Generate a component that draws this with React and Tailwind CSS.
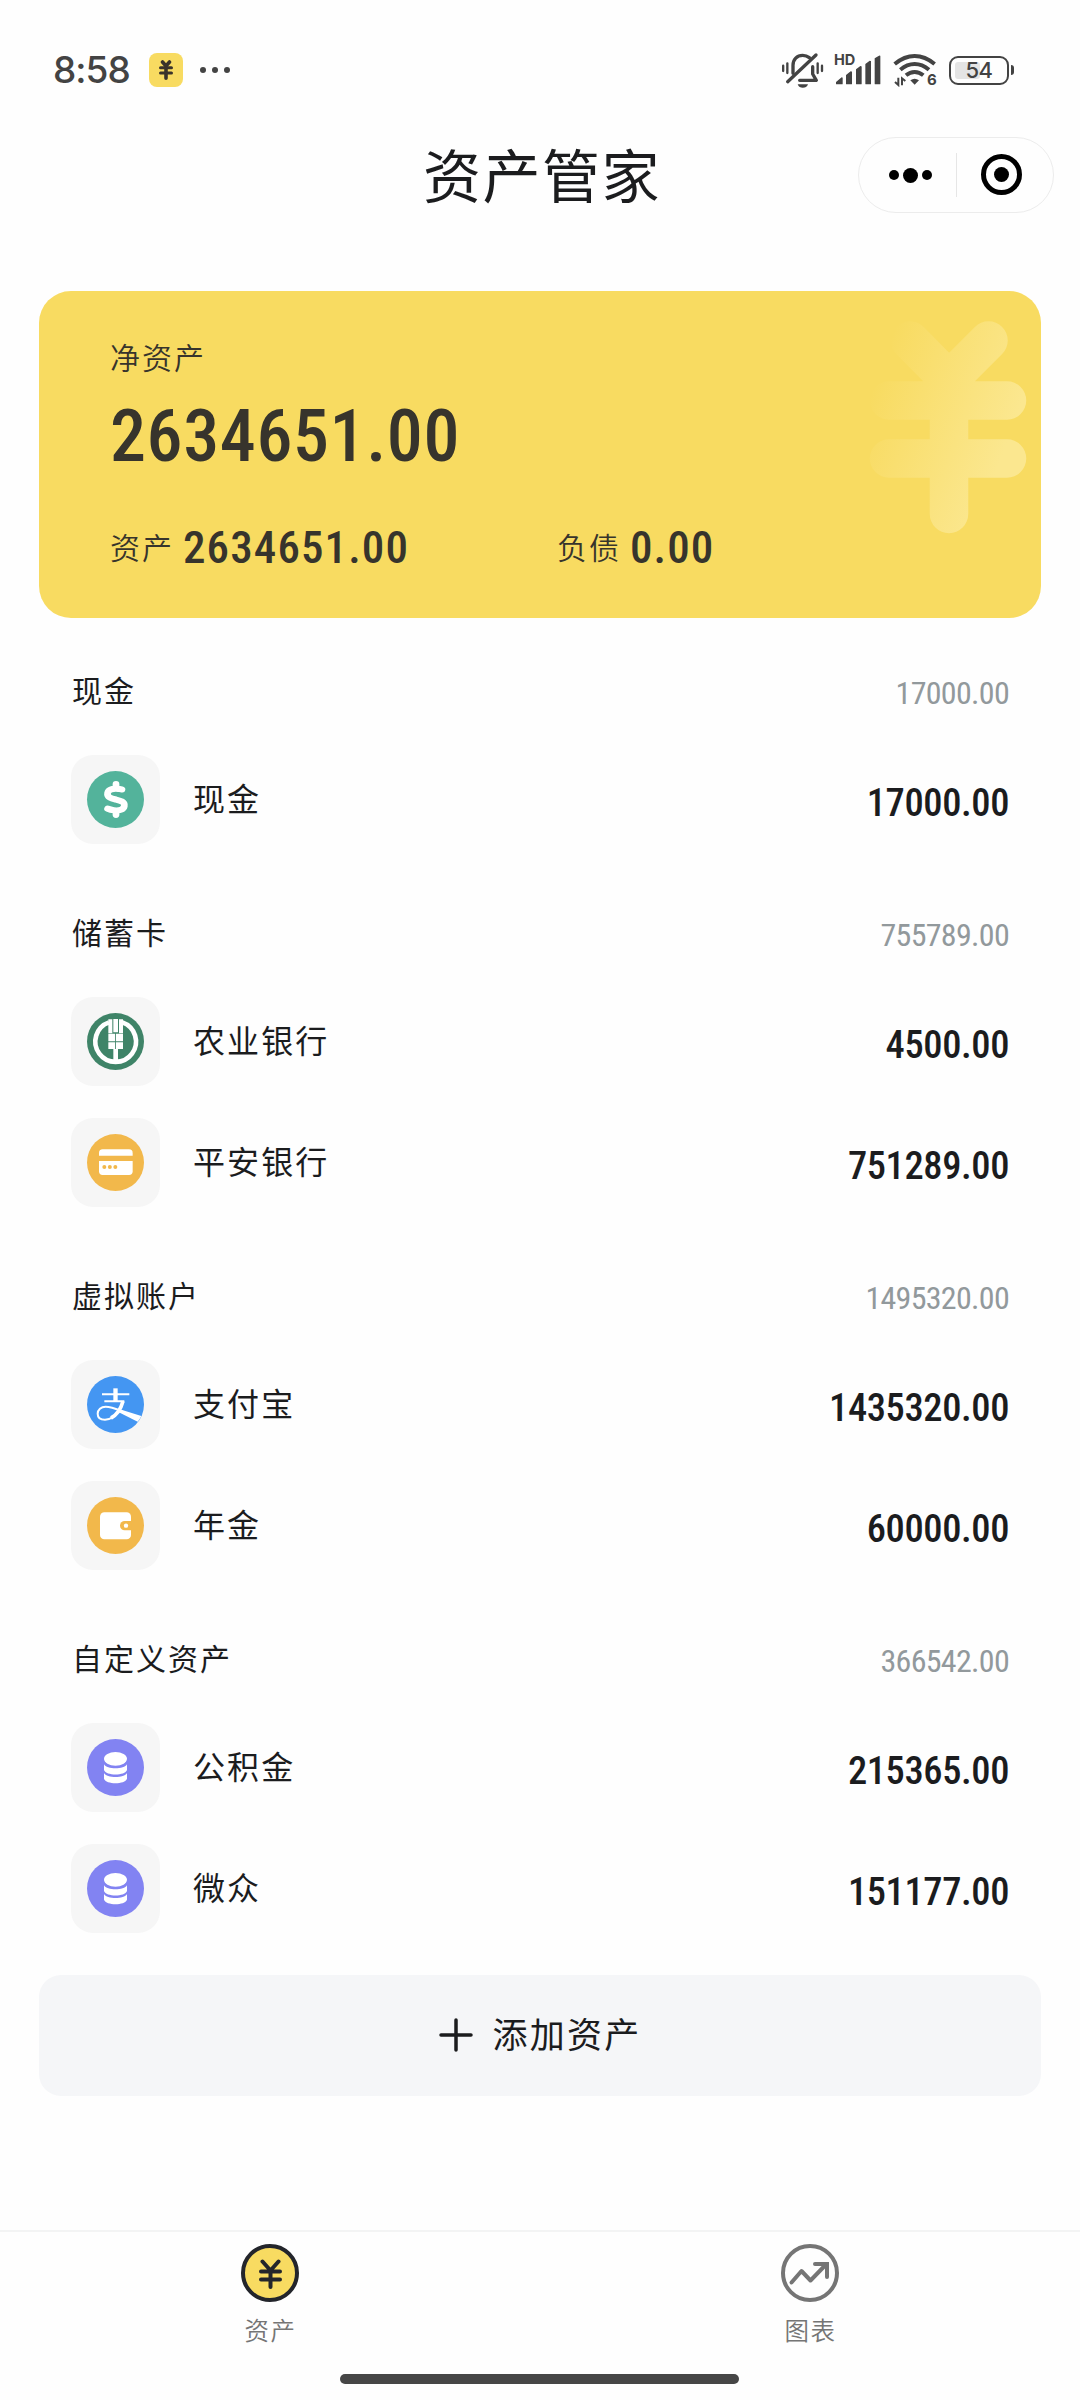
import { FaDollarSign } from 'react-icons/fa6'

const groups = [
  {
    title: '现金',
    total: '17000.00',
    items: [{ name: '现金', amount: '17000.00', Icon: CashIcon }],
  },
  {
    title: '储蓄卡',
    total: '755789.00',
    items: [
      { name: '农业银行', amount: '4500.00', Icon: AbcIcon },
      { name: '平安银行', amount: '751289.00', Icon: CardIcon },
    ],
  },
  {
    title: '虚拟账户',
    total: '1495320.00',
    items: [
      { name: '支付宝', amount: '1435320.00', Icon: AlipayIcon },
      { name: '年金', amount: '60000.00', Icon: WalletIcon },
    ],
  },
  {
    title: '自定义资产',
    total: '366542.00',
    items: [
      { name: '公积金', amount: '215365.00', Icon: CoinsIcon },
      { name: '微众', amount: '151177.00', Icon: CoinsIcon },
    ],
  },
]

function CashIcon() {
  return (
    <div className="size-[57px] rounded-full bg-[#53b39b] flex items-center justify-center">
      <FaDollarSign className="h-[35px] w-[24px] text-white overflow-visible" preserveAspectRatio="none" strokeWidth="26" />
    </div>
  )
}

function AbcIcon() {
  return (
    <svg viewBox="0 0 171 171" className="size-[57px]">
      <circle cx="85.5" cy="85.5" r="85.5" fill="#3f8468" />
      <path d="M66 28a61 61 0 1 0 40 0" fill="none" stroke="#fff" strokeWidth="14" />
      <path d="M64 19h12v42H64zM96 19h12v42H96zM79 18h14v40H79z" fill="#fff" />
      <path d="M64 62h20.500v23H64zM87 62h21v23H87zM64 87.500h20.500V108H64zM87 87.500h21V108H87z" fill="#fff" />
      <path d="M79 108h14v36H79z" fill="#fff" />
    </svg>
  )
}

function CardIcon() {
  return (
    <svg viewBox="0 0 171 171" className="size-[57px]">
      <circle cx="85.5" cy="85.5" r="85.5" fill="#f2b84b" />
      <path d="M36 65v-8a11 11 0 0 1 11-11h79a11 11 0 0 1 11 11v8z" fill="#fff" />
      <path d="M36 81v31a11 11 0 0 0 11 11h79a11 11 0 0 0 11-11V81z" fill="#fff" />
      <g fill="#f2b84b">
        <circle cx="52" cy="99" r="6" />
        <circle cx="68.5" cy="99" r="6" />
        <circle cx="85" cy="99" r="6" />
      </g>
    </svg>
  )
}

function AlipayIcon() {
  return (
    <svg viewBox="0 0 171 171" className="size-[57px]" fill="none" stroke="#fff">
      <circle cx="85.5" cy="85.5" r="85.5" fill="#4496f2" stroke="none" />
      <path d="M45 55h82M52 76h60" strokeWidth="6" />
      <path d="M85.500 37v39" strokeWidth="13" />
      <path d="M108 76c-7 25-20 42-36 50" strokeWidth="11" />
      <path d="M78 123c-8 6-15 8-24 8-15 0-22-8-22-18 0-12 10-21 24-21 20 0 34 8 56 17" strokeWidth="6" />
      <path d="M96 99l67 21q-4 9-11 17L94 108z" fill="#fff" stroke="none" />
    </svg>
  )
}

function WalletIcon() {
  return (
    <svg viewBox="0 0 171 171" className="size-[57px]">
      <circle cx="85.5" cy="85.5" r="85.5" fill="#f2b84b" />
      <rect x="39" y="46" width="93" height="81" rx="13" fill="#fff" />
      <path d="M134 72h-21a14 14 0 0 0 0 28h21z" fill="#f2b84b" />
      <circle cx="117" cy="86" r="6.500" fill="#fff" />
    </svg>
  )
}

function CoinsIcon() {
  return (
    <svg viewBox="0 0 171 171" className="size-[57px]">
      <circle cx="85.5" cy="85.5" r="85.5" fill="#8283f2" />
      <g fill="#fff">
        <ellipse cx="85.5" cy="59.500" rx="34.500" ry="20.500" />
        <path d="M51 76c8 16 61 16 69 0v17c-6 18-63 18-69 0z" />
        <path d="M51 102c8 16 61 16 69 0v17c-6 18-63 18-69 0z" />
      </g>
    </svg>
  )
}

function StatusBar() {
  return (
    <div className="h-[120px] pt-[20px] pl-[53px] pr-[66px] flex items-center justify-between text-[#434343]">
      <div className="flex items-center">
        <span className='w-[96px] font-["Inter",sans-serif] text-[37px] leading-[44px] font-[450] tracking-[-1px]'>8:58</span>
        <span className="size-[34px] rounded-[8px] bg-[#f8db61] flex items-center justify-center">
          <svg viewBox="0 0 14 20" className="w-[14px] h-[20px]" fill="none" stroke="#3a332b" strokeWidth="3.600" strokeLinecap="round">
            <path d="M3.500 2L7 6l3.500-4M7 6v12.200" />
            <path d="M1.500 7.800h11M1.500 13h11" strokeWidth="3" />
          </svg>
        </span>
        <span className="ml-[17px] flex gap-[6px]">
          <i className="size-[6px] rounded-full bg-[#434343]" />
          <i className="size-[6px] rounded-full bg-[#434343]" />
          <i className="size-[6px] rounded-full bg-[#434343]" />
        </span>
      </div>

      <div className="flex items-center">
        {/* silent mode */}
        <svg viewBox="0 0 126 108" className="w-[42px] h-[36px]" fill="none" stroke="#434343" strokeLinecap="round">
          <path d="M33 64V40C33 22 45 10 62 10c9 0 15 3 20 7" strokeWidth="10" />
          <path d="M102 9L17 89" strokeWidth="10" />
          <path d="M92 44v22l11 19H53" strokeWidth="10" strokeLinejoin="round" />
          <path d="M3.500 41v16M16 34v29M107 34v29M120 41v16" strokeWidth="7" />
          <path d="M47 97h31c-3 8-8 10-15.500 10S50 105 47 97z" fill="#434343" stroke="none" />
        </svg>
        {/* mobile signal */}
        <div className="relative ml-[10px] w-[47px] h-[30px]">
          <span className='absolute left-0 top-[-4px] font-["Inter",sans-serif] text-[14.500px] leading-[18px] font-bold'>HD</span>
          <svg viewBox="0 0 140 90" className="w-[46.700px] h-[30px]" fill="#434343">
            <path d="M6 86v-5l17-14q3 0 3 2v17q0 2-2 2H8q-2 0-2-2zM36 86V60l14-11q4 0 4 2v35q0 2-2 2H38q-2 0-2-2zM66 86V43l13-10q4 0 4 2v51q0 2-2 2H68q-2 0-2-2zM94 86V27l13-10q4 0 4 2v67q0 2-2 2H96q-2 0-2-2zM122 86V10l13-8q4-2 4 2v82q0 2-2 2h-13q-2 0-2-2z" />
          </svg>
        </div>
        {/* wifi */}
        <div className="relative ml-[12px] w-[43px] h-[34px]">
          <svg viewBox="0 0 130 102" className="w-[43.300px] h-[34px]" fill="none" stroke="#434343">
            <path d="M5 33Q34 9 65 9t60 24" strokeWidth="12" />
            <path d="M22 50Q42 33 65 33t43 17" strokeWidth="12" />
            <path d="M39 67Q51 57 65 57t26 10" strokeWidth="12" />
            <path d="M52 82q13-10 26 0L65 95z" fill="#434343" stroke="none" />
            <path d="M16 74v22l-10-9M27 97V76l10 8" strokeWidth="6" />
          </svg>
          <span className='absolute left-[34px] top-[18px] font-["Inter",sans-serif] text-[15px] leading-[18px] font-bold'>6</span>
        </div>
        {/* battery */}
        <div className="ml-[13px] w-[60px] h-[29px] rounded-[9px] border-[2.500px] border-[#434343] relative flex items-center justify-center">
          <div className="absolute left-[4px] top-[4px] w-[25px] h-[17px] rounded-[3px] bg-[#e4e4e4]" />
          <span className='relative font-["Inter",sans-serif] text-[22px] leading-[22px] tracking-[-0.5px] font-[450]'>54</span>
        </div>
        <i className="ml-[2px] w-[3px] h-[10px] rounded-r-[3px] bg-[#434343]" />
      </div>
    </div>
  )
}

function Header() {
  return (
    <div className="h-[110px] pr-[26px] pl-[30px] grid grid-cols-[1fr_auto_1fr] items-center">
      <span />
      <h1 className="pb-[5px] text-[58px] leading-[80px] font-normal tracking-[1.5px] text-[#1b1c1e]">资产管家</h1>
      <div className="justify-self-end w-[196px] h-[76px] rounded-full border border-[#ececec] flex items-center">
        <div className="w-[97px] pl-[6px] flex items-center justify-center gap-[4px]">
          <i className="size-[10px] rounded-full bg-black" />
          <i className="size-[15px] rounded-full bg-black" />
          <i className="size-[10px] rounded-full bg-black" />
        </div>
        <i className="w-px h-[44px] bg-[#e6e6e6]" />
        <div className="ml-[24px] mb-[2px] size-[41px] rounded-full border-[5px] border-black flex items-center justify-center">
          <i className="size-[15px] rounded-full bg-black" />
        </div>
      </div>
    </div>
  )
}

function SummaryCard() {
  return (
    <div className="relative mx-[39px] mt-[61px] h-[327px] rounded-[32px] bg-[#f8db61] pl-[71px] pt-[45px] text-[#37342c]">
      <svg viewBox="0 0 160 220" className="absolute left-[830px] top-[29px] w-[160px] h-[220px]">
        <defs>
          <linearGradient id="fade" gradientUnits="userSpaceOnUse" x1="14" y1="40" x2="150" y2="90">
            <stop offset="0" stopColor="#fbe78f" stopOpacity="0" />
            <stop offset="1" stopColor="#fbe78f" />
          </linearGradient>
        </defs>
        <path
          d="M41 20.500L80 60l39.500-39.500M80 60v134M20 80.500h118M20 138.500h118"
          fill="none" stroke="url(#fade)" strokeWidth="38.500" strokeLinecap="round"
        />
      </svg>
      <p className="text-[30px] leading-[40px] font-[350] tracking-[2px]">净资产</p>
      <p className='mt-[25px] font-["Roboto_Condensed",sans-serif] text-[72px] leading-[72px] font-medium tracking-[0.600px]'>2634651.00</p>
      <div className="mt-[51px] h-[48px] flex items-center">
        <div className="w-[447px] flex items-center gap-[9px]">
          <span className="pb-[5px] text-[30px] leading-[40px] font-[350] tracking-[2px]">资产</span>
          <span className='font-["Roboto_Condensed",sans-serif] text-[45px] leading-[48px] font-medium tracking-[1.100px]'>2634651.00</span>
        </div>
        <div className="flex items-center gap-[9px]">
          <span className="pb-[5px] text-[30px] leading-[40px] font-[350] tracking-[2px]">负债</span>
          <span className='font-["Roboto_Condensed",sans-serif] text-[45px] leading-[48px] font-medium tracking-[1.100px]'>0.00</span>
        </div>
      </div>
    </div>
  )
}

function AssetGroup({ title, total, items }) {
  return (
    <section>
      <div className="h-[121px] pt-[23px] flex items-center justify-between">
        <h2 className="pb-[3px] pl-[1px] text-[30px] leading-[40px] font-normal tracking-[2px]">{title}</h2>
        <span className='pt-[6px] font-["Roboto_Condensed",sans-serif] text-[32px] leading-[40px] font-normal tracking-[-0.700px] text-[#92999c]'>{total}</span>
      </div>
      {items.map(({ name, amount, Icon }) => (
        <div key={name} className="h-[121px] flex items-center">
          <div className="size-[89px] rounded-[22px] bg-[#f6f6f6] flex items-center justify-center">
            <Icon />
          </div>
          <span className="ml-[33px] pb-[6px] text-[32px] leading-[40px] tracking-[2.100px]">{name}</span>
          <span className='ml-auto pt-[6px] font-["Roboto_Condensed",sans-serif] text-[38.500px] leading-[44px] font-medium tracking-[-0.400px]'>{amount}</span>
        </div>
      ))}
    </section>
  )
}

function TabBar() {
  return (
    <nav className="mt-[134px] h-[170px] border-t-2 border-[#f3f4f4] pt-[12px] flex flex-col items-center">
      <div className="w-full flex text-[24.500px] leading-[36px] font-[350] tracking-[1.500px] text-[#757575]">
        <div className="flex-1 flex flex-col items-center">
          <svg viewBox="0 0 58 58" className="size-[58px]" fill="none" stroke="#23252b" strokeLinecap="round">
            <circle cx="29" cy="29" r="27" fill="#f8db61" strokeWidth="4" />
            <path d="M21.500 17.500L29.500 26.500l8-9M29.500 26.500V43M20 27.500h19M20 35.500h19" strokeWidth="4" strokeLinejoin="round" />
          </svg>
          <span className="mt-[10px] pl-[1px]">资产</span>
        </div>
        <div className="flex-1 flex flex-col items-center">
          <svg viewBox="0 0 58 58" className="size-[58px]" fill="none" stroke="#757575" strokeWidth="4">
            <circle cx="29" cy="29" r="27" />
            <path d="M10.500 38.500L20.500 27l9 9.500L45 20.500" strokeLinecap="round" strokeLinejoin="round" />
            <path d="M34 20h12v13" strokeLinecap="round" />
          </svg>
          <span className="mt-[10px] pl-[1px]">图表</span>
        </div>
      </div>
      <i className="mt-[26px] mr-[2px] w-[399px] h-[10px] rounded-full bg-[#464646]" />
    </nav>
  )
}

export default function App() {
  return (
    <div className='w-[1080px] h-[2400px] overflow-hidden bg-[#fefefe] font-["Noto_Sans_CJK_SC",sans-serif] text-[#1b1c1e]'>
      <StatusBar />
      <Header />
      <SummaryCard />
      <main className="pl-[71px] pr-[71px]">
        {groups.map(group => (
          <AssetGroup key={group.title} {...group} />
        ))}
      </main>
      <button className="mt-[26px] mx-[39px] w-[1002px] h-[121px] rounded-[22px] bg-[#f5f6f8] flex items-center justify-center">
        <svg viewBox="0 0 34 34" className="mb-[1px] size-[34px]" stroke="#1b1c1e" strokeWidth="3.500" strokeLinecap="round">
          <path d="M17 2v30M2 17h30" />
        </svg>
        <span className="ml-[20px] pb-[6px] text-[35px] leading-[48px] tracking-[2.200px]">添加资产</span>
      </button>
      <TabBar />
    </div>
  )
}
